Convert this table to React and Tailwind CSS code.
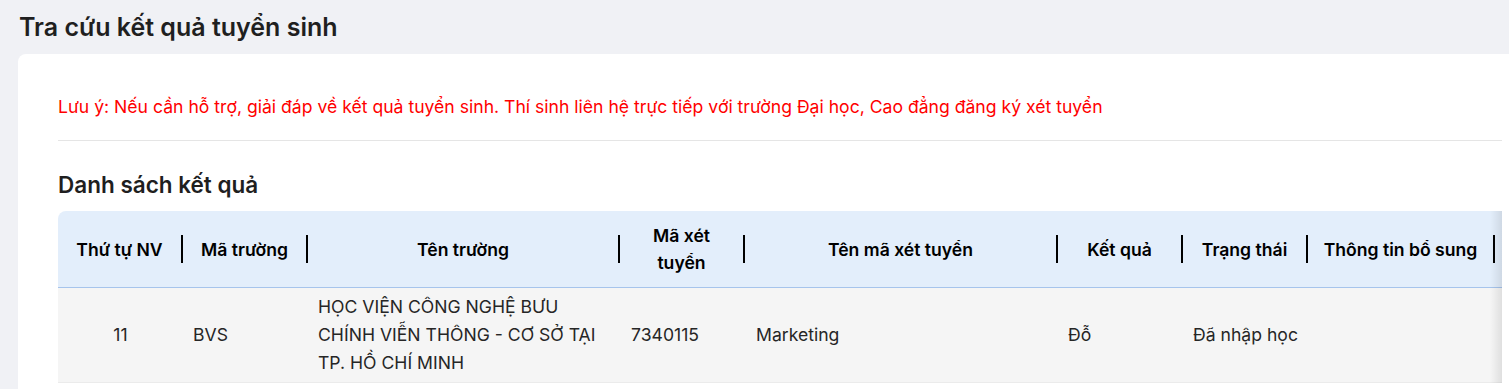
import React from "react";

const cols = [
  { w: "w-[125px]", title: "Thứ tự NV" },
  { w: "w-[125px]", title: "Mã trường" },
  { w: "w-[312px]", title: "Tên trường" },
  { w: "w-[125px]", title: "Mã xét tuyển", wrap: true },
  { w: "w-[313px]", title: "Tên mã xét tuyển" },
  { w: "w-[125px]", title: "Kết quả" },
  { w: "w-[125px]", title: "Trạng thái" },
  { w: "w-[187px]", title: "Thông tin bổ sung" },
  { w: "w-[160px]", title: "", last: true },
];

function HeaderCell({ c }) {
  return (
    <div className={`${c.w} shrink-0 flex items-center`}>
      <div className="flex-1 px-[6px] text-center leading-[27px] whitespace-nowrap">
        {c.wrap ? (
          <>
            Mã xét
            <br />
            tuyển
          </>
        ) : (
          c.title
        )}
      </div>
      {!c.last && <div className="w-[2px] h-[28px] bg-black shrink-0" />}
    </div>
  );
}

export default function App() {
  return (
    <div
      className="w-[1509px] h-[389px] overflow-hidden bg-[#f0f1f5] pl-[18px]"
      style={{ fontFamily: "Inter, 'Noto Sans', sans-serif" }}
    >
      <h1 className="h-[54px] pt-[11px] pl-[1px] text-[25px] leading-[32px] font-semibold text-[#1f1f1f]">
        Tra cứu kết quả tuyển sinh
      </h1>
      <div className="w-[1524px] h-[400px] bg-white rounded-tl-lg px-10 pt-[40px]">
        <p className="text-[17.6px] leading-[26px] text-[#ff0000]">
          Lưu ý: Nếu cần hỗ trợ, giải đáp về kết quả tuyển sinh. Thí sinh liên hệ trực tiếp với trường Đại học, Cao đẳng đăng ký xét tuyển
        </p>
        <div className="mt-[20px] border-t border-[#e5e5e5]" />
        <h2 className="mt-[29px] text-[22.5px] leading-[30px] font-semibold text-[#1f1f1f]">
          Danh sách kết quả
        </h2>
        <div className="relative mt-[11px] w-[1444px] overflow-hidden rounded-tl-lg">
          <div className="w-max">
            <div className="flex h-[77px] bg-[#e3eefb] border-b border-[#a6c4ec] text-[17.6px] font-semibold text-black">
              {cols.map((c, i) => (
                <HeaderCell key={i} c={c} />
              ))}
            </div>
            <div className="flex h-[95px] items-center bg-[#f5f5f5] border-b border-[#ebebeb] text-[17.6px] leading-[28px] text-[#262626]">
              <div className="w-[125px] shrink-0 text-center">11</div>
              <div className="w-[125px] shrink-0 pl-[10px]">BVS</div>
              <div className="w-[312px] shrink-0 pl-[10px] pr-[8px]">
                HỌC VIỆN CÔNG NGHỆ BƯU CHÍNH VIỄN THÔNG - CƠ SỞ TẠI TP. HỒ CHÍ MINH
              </div>
              <div className="w-[125px] shrink-0 pl-[11px]">7340115</div>
              <div className="w-[313px] shrink-0 pl-[11px]">Marketing</div>
              <div className="w-[125px] shrink-0 pl-[10px]">Đỗ</div>
              <div className="w-[125px] shrink-0 pl-[10px]">Đã nhập học</div>
              <div className="w-[187px] shrink-0" />
              <div className="w-[160px] shrink-0" />
            </div>
          </div>
          <div className="pointer-events-none absolute right-0 top-0 h-[172px] w-[12px] bg-gradient-to-l from-[rgba(0,0,0,0.09)] to-transparent" />
        </div>
      </div>
    </div>
  );
}
